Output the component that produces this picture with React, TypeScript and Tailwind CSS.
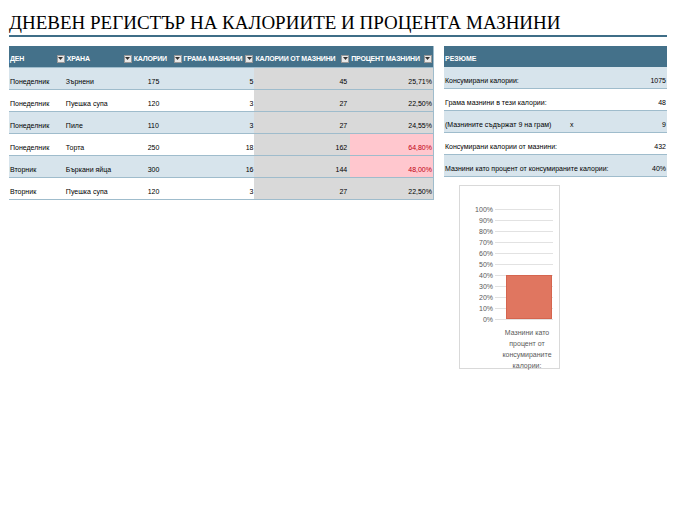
import React from "react";

const rows = [
  ["Понеделник", "Зърнени", "175", "5", "45", "25,71%", false],
  ["Понеделник", "Пуешка супа", "120", "3", "27", "22,50%", false],
  ["Понеделник", "Пиле", "110", "3", "27", "24,55%", false],
  ["Понеделник", "Торта", "250", "18", "162", "64,80%", true],
  ["Вторник", "Бъркани яйца", "300", "16", "144", "48,00%", true],
  ["Вторник", "Пуешка супа", "120", "3", "27", "22,50%", false],
] as const;

const cols = ["w-[57px]", "w-[67px]", "w-[50px]", "w-[72px]", "w-[96px]", "w-[83px]"];
const heads = ["ДЕН", "ХРАНА", "КАЛОРИИ", "ГРАМА МАЗНИНИ", "КАЛОРИИ ОТ МАЗНИНИ", "ПРОЦЕНТ МАЗНИНИ"];

function Drop() {
  return (
    <span className="w-[8px] h-[8px] bg-[#e8e8e8] border border-[#999] flex items-center justify-center shrink-0">
      <svg width="5" height="3" viewBox="0 0 5 3"><path d="M0 0h5L2.5 3z" fill="#333" /></svg>
    </span>
  );
}

const summary = [
  ["Консумирани калории:", "", "1075"],
  ["Грама мазнини в тези калории:", "", "48"],
  ["(Мазнините съдържат 9 на грам)", "x", "9"],
  ["Консумирани калории от мазнини:", "", "432"],
  ["Мазнини като процент от консумираните калории:", "", "40%"],
];

export default function App() {
  const ticks = ["100%", "90%", "80%", "70%", "60%", "50%", "40%", "30%", "20%", "10%", "0%"];
  return (
    <div className="w-[675px] h-[520px] bg-white relative text-[7px] text-black" style={{ fontFamily: "'Liberation Sans', Arial, sans-serif" }}>
      <div className="pt-[11px] px-[9px]">
        <div className="text-[19px] leading-[24px] text-black border-b-2 border-[#3f6e87] w-[658px] whitespace-nowrap" style={{ fontFamily: "'Liberation Serif', serif" }}>
          ДНЕВЕН РЕГИСТЪР НА КАЛОРИИТЕ И ПРОЦЕНТА МАЗНИНИ
        </div>
      </div>
      <div className="flex gap-[10px] pl-[9px] mt-[9px] items-start">
        <div className="w-[425px] border-r border-b border-[#9fbccc]">
          <div className="flex h-[21px] bg-[#44718a] text-white font-bold items-end pb-[3px] whitespace-nowrap tracking-[-0.2px]">
            {heads.map((h, i) => (
              <div key={i} className={`${cols[i]} flex items-center justify-between pl-[1px] pr-[1px] overflow-hidden`}>
                <span>{h}</span>
                <Drop />
              </div>
            ))}
          </div>
          {rows.map((r, ri) => {
            const band = ri % 2 === 0 ? "bg-[#d7e4ec]" : "bg-white";
            return (
              <div key={ri} className="flex h-[22px] items-stretch border-t border-[#9fbccc]">
                <div className={`${cols[0]} ${band} flex items-end pb-[2px] pl-[1px]`}>{r[0]}</div>
                <div className={`${cols[1]} ${band} flex items-end pb-[2px]`}>{r[1]}</div>
                <div className={`${cols[2]} ${band} flex items-end pb-[2px] pl-[15px]`}>{r[2]}</div>
                <div className={`${cols[3]} ${band} flex items-end justify-end pb-[2px] pr-[1px]`}>{r[3]}</div>
                <div className={`${cols[4]} bg-[#d9d9d9] flex items-end justify-end pb-[2px] pr-[3px]`}>{r[4]}</div>
                <div className={`${cols[5]} ${r[6] ? "bg-[#ffc7ce] text-[#c0000f]" : "bg-[#d9d9d9]"} flex items-end justify-end pb-[2px] pr-[1px]`}>{r[5]}</div>
              </div>
            );
          })}
        </div>
        <div className="flex flex-col">
          <div className="w-[223px]">
            <div className="h-[21px] bg-[#44718a] text-white font-bold flex items-end pb-[3px] pl-[1px]">РЕЗЮМЕ</div>
            {summary.map((s, i) => (
              <div key={i} className={`h-[22px] flex items-end pb-[2px] px-[1px] border-b border-[#9fbccc] whitespace-nowrap ${i % 2 === 0 ? "bg-[#d7e4ec]" : "bg-white"}`}>
                <span className={s[1] ? "w-[125px]" : ""}>{s[0]}</span>
                <span className="flex-1">{s[1]}</span>
                <span>{s[2]}</span>
              </div>
            ))}
          </div>
          <div className="ml-[15px] mt-[8px] w-[101px] h-[184px] border border-[#d9d9d9] flex flex-col items-center text-[#595959]">
            <div className="flex mt-[18px] w-full">
              <div className="w-[35px] flex flex-col items-end pr-[2px]">
                {ticks.map((t) => (
                  <div key={t} className="h-[11px] leading-[11px]">{t}</div>
                ))}
              </div>
              <div className="relative w-[58px] h-[110px] mt-[5px]">
                {ticks.map((t, i) => (
                  <div key={t} className="absolute left-0 right-0 border-t border-[#e2e2e2]" style={{ top: i * 11 }} />
                ))}
                <div className="absolute left-[11px] w-[46px] bg-[#e07660] border border-[#d5654f]" style={{ top: 66, height: 44 }} />
              </div>
            </div>
            <div className="text-center leading-[11px] mt-[2px] pl-[38px] w-full">
              <div className="w-[58px]">Мазнини като процент от консумираните калории:</div>
            </div>
          </div>
        </div>
      </div>
    </div>
  );
}
